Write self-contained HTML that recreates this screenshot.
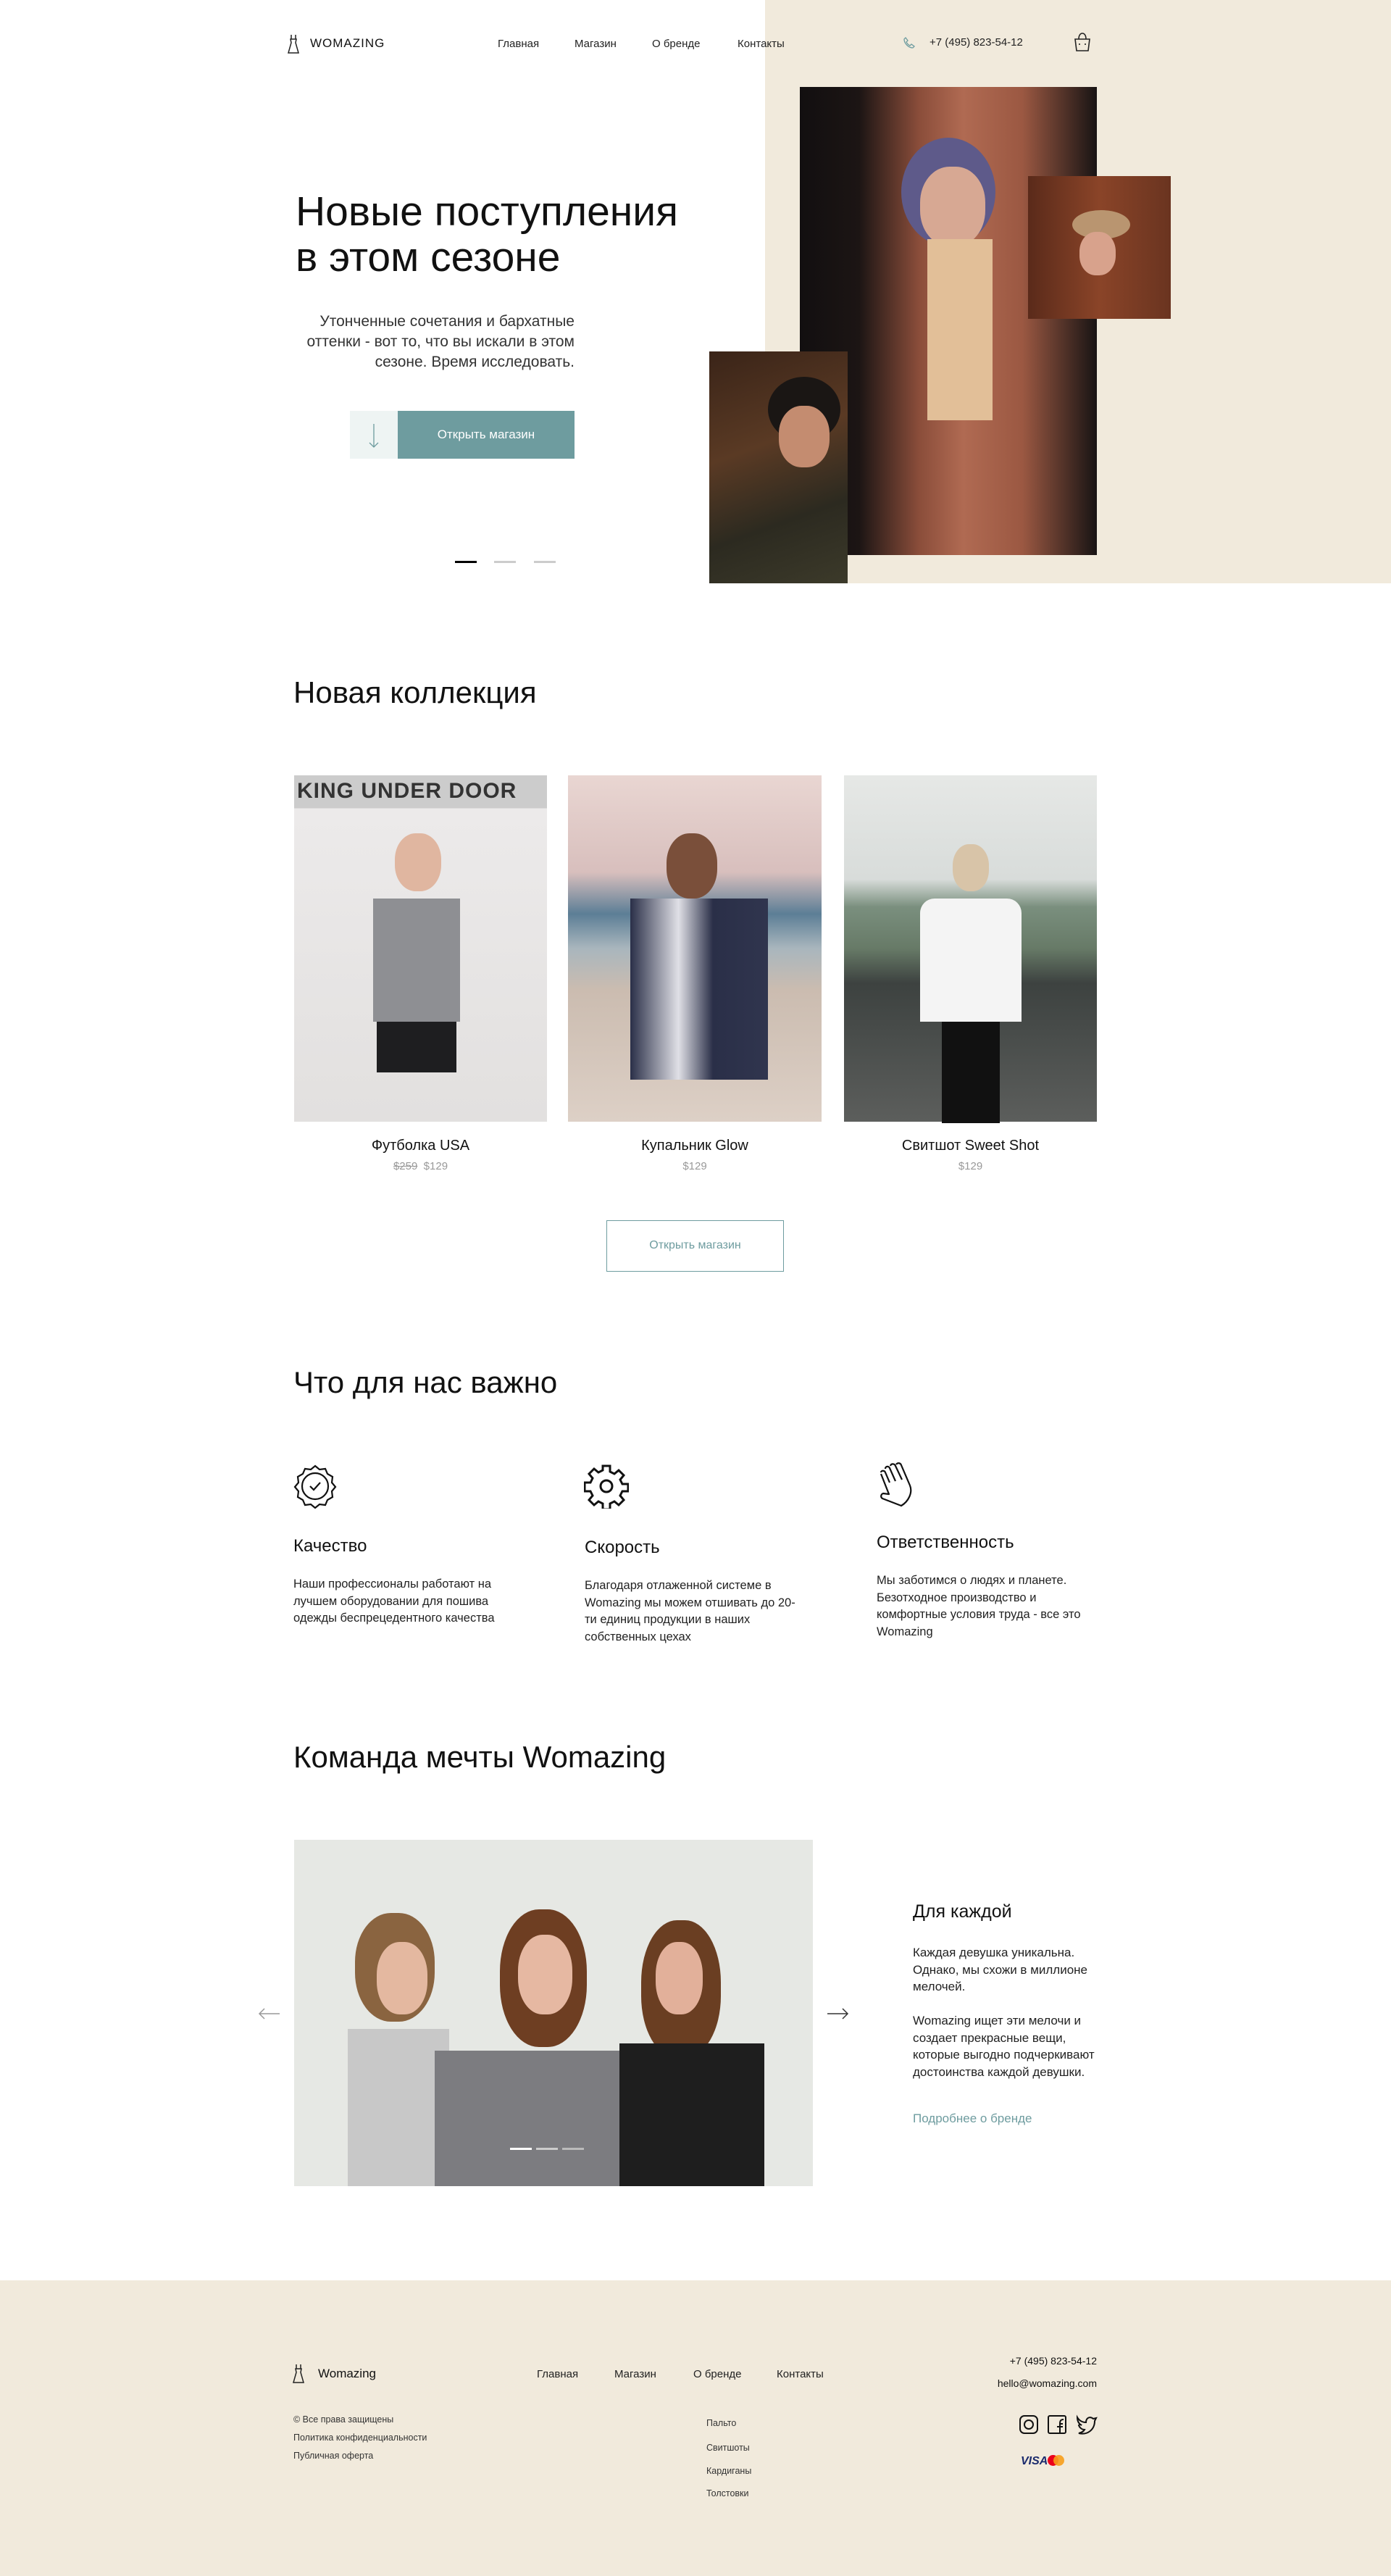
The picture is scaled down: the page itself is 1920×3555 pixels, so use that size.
<!DOCTYPE html>
<html><head><meta charset="utf-8"><style>
*{margin:0;padding:0;box-sizing:border-box}
body{width:1920px;height:3555px;position:relative;background:#fff;font-family:"Liberation Sans","Noto Sans CJK SC",sans-serif;color:#111;overflow:hidden}
.a{position:absolute}
.nav{font-size:15px;color:#222}
.t{white-space:nowrap}
</style></head><body>
<div class="a" style="left:1056px;top:0;width:864px;height:805px;background:#F1EADC"></div>
<!-- header -->
<svg class="a" style="left:396px;top:47px" width="18" height="28" viewBox="0 0 18 28" fill="none" stroke="#222" stroke-width="1.5"><path d="M6 1v6M12 1v6M5 7h8l-1 5 4 14H2l4-14z"/></svg>
<div class="a t" style="left:428px;top:50px;font-size:17px;letter-spacing:1px">WOMAZING</div>
<div class="a t nav" style="left:687px;top:52px">Главная</div>
<div class="a t nav" style="left:793px;top:52px">Магазин</div>
<div class="a t nav" style="left:900px;top:52px">О бренде</div>
<div class="a t nav" style="left:1018px;top:52px">Контакты</div>
<svg class="a" style="left:1246px;top:50px" width="18" height="18" viewBox="0 0 18 18" fill="none" stroke="#6E9C9F" stroke-width="1.3"><path d="M4 2l3 4-2 2c1 2 3 4 5 5l2-2 4 3-2 2C8 16 2 10 2 4z"/></svg>
<div class="a t nav" style="left:1283px;top:50px">+7 (495) 823-54-12</div>
<svg class="a" style="left:1481px;top:43px" width="26" height="30" viewBox="0 0 26 30" fill="none" stroke="#222" stroke-width="1.6"><path d="M3 11h20l-2 16H5z M8 11c0-5 2-8 5-8s5 3 5 8 M9 17v2M17 17v2"/></svg>
<!-- hero -->
<div class="a t" style="left:408px;top:261px;font-size:57px;line-height:63px;font-weight:400">Новые поступления<br>в этом сезоне</div>
<div class="a" style="left:390px;top:430px;width:403px;text-align:right;font-size:21px;line-height:28px;color:#333">Утонченные сочетания и бархатные оттенки - вот то, что вы искали в этом сезоне. Время исследовать.</div>
<div class="a" style="left:483px;top:567px;width:66px;height:66px;background:#EEF4F3"></div>
<svg class="a" style="left:506px;top:583px" width="20" height="36" viewBox="0 0 20 36" fill="none" stroke="#6E9C9F" stroke-width="1.3"><path d="M10 2v32M4 28l6 6 6-6"/></svg>
<div class="a" style="left:549px;top:567px;width:244px;height:66px;background:#6E9C9F;color:#fff;font-size:17px;text-align:center;line-height:66px">Открыть магазин</div>
<div class="a" style="left:628px;top:774px;width:30px;height:3px;background:#000"></div>
<div class="a" style="left:682px;top:774px;width:30px;height:3px;background:#ccc"></div>
<div class="a" style="left:737px;top:774px;width:30px;height:3px;background:#ccc"></div>
<div class="a" style="left:1104px;top:120px;width:410px;height:646px;background:linear-gradient(90deg,#120f10 0%,#1c1514 20%,#8a4d3a 40%,#b06a52 55%,#9b5842 75%,#181414 100%)"></div>
<div class="a" style="left:1244px;top:190px;width:130px;height:150px;border-radius:50%;background:#5e5a8a"></div>
<div class="a" style="left:1270px;top:230px;width:90px;height:110px;border-radius:45%;background:#d7a893"></div>
<div class="a" style="left:1280px;top:330px;width:90px;height:250px;background:#e2bf98"></div>
<div class="a" style="left:1419px;top:243px;width:197px;height:197px;background:linear-gradient(90deg,#5a2a1a,#8a4428 50%,#6a3420)"></div>
<div class="a" style="left:1480px;top:290px;width:80px;height:40px;border-radius:50%;background:#b99570"></div>
<div class="a" style="left:1490px;top:320px;width:50px;height:60px;border-radius:45%;background:#d8a28c"></div>
<div class="a" style="left:979px;top:485px;width:191px;height:320px;background:linear-gradient(160deg,#3a2418,#5a3a24 40%,#2c2a20 70%,#3c3a2a)"></div>
<div class="a" style="left:1060px;top:520px;width:100px;height:90px;border-radius:50%;background:#1a1614"></div>
<div class="a" style="left:1075px;top:560px;width:70px;height:85px;border-radius:45%;background:#c48c70"></div>
<!-- new collection -->
<div class="a t" style="left:405px;top:932px;font-size:42px">Новая коллекция</div>
<div class="a" style="left:406px;top:1070px;width:349px;height:478px;background:linear-gradient(180deg,#ccc 0,#ccc 45px,#eceaea 46px,#e2e0df 100%)"></div>
<div class="a t" style="left:410px;top:1075px;font-size:30px;font-weight:bold;color:#333;letter-spacing:1px">KING UNDER DOOR</div>
<div class="a" style="left:545px;top:1150px;width:64px;height:80px;border-radius:45%;background:#e0b6a0"></div>
<div class="a" style="left:515px;top:1240px;width:120px;height:170px;background:#8e8f93"></div>
<div class="a" style="left:520px;top:1410px;width:110px;height:70px;background:#1e1e20"></div>
<div class="a" style="left:784px;top:1070px;width:350px;height:478px;background:linear-gradient(180deg,#e9d6d2 0%,#d8bfbd 28%,#5c7e96 40%,#a9b6bd 50%,#cbbcb0 62%,#ddd0c6 100%)"></div>
<div class="a" style="left:920px;top:1150px;width:70px;height:90px;border-radius:45%;background:#7a4f3a"></div>
<div class="a" style="left:870px;top:1240px;width:190px;height:250px;background:linear-gradient(90deg,#2a2f48,#e0e0e6 35%,#2a2f48 60%,#30354e)"></div>
<div class="a" style="left:1165px;top:1070px;width:349px;height:478px;background:linear-gradient(180deg,#e6e8e6 0%,#d8dcda 30%,#7a8f7e 38%,#677a67 50%,#3d4240 60%,#5c5e5c 100%)"></div>
<div class="a" style="left:1315px;top:1165px;width:50px;height:65px;border-radius:45%;background:#d8c4a8"></div>
<div class="a" style="left:1270px;top:1240px;width:140px;height:170px;background:#f4f4f4;border-radius:20px 20px 0 0"></div>
<div class="a" style="left:1300px;top:1410px;width:80px;height:140px;background:#111"></div>
<div class="a" style="left:406px;top:1570px;width:349px;text-align:center;font-size:20px">Футболка USA</div>
<div class="a" style="left:406px;top:1601px;width:349px;text-align:center;font-size:15px;color:#999"><s>$259</s>&nbsp; $129</div>
<div class="a" style="left:784px;top:1570px;width:350px;text-align:center;font-size:20px">Купальник Glow</div>
<div class="a" style="left:784px;top:1601px;width:350px;text-align:center;font-size:15px;color:#999">$129</div>
<div class="a" style="left:1165px;top:1570px;width:349px;text-align:center;font-size:20px">Свитшот Sweet Shot</div>
<div class="a" style="left:1165px;top:1601px;width:349px;text-align:center;font-size:15px;color:#999">$129</div>
<div class="a" style="left:837px;top:1684px;width:245px;height:71px;border:1.5px solid #6E9C9F;color:#6E9C9F;font-size:16px;text-align:center;line-height:68px">Открыть магазин</div>
<!-- values -->
<div class="a t" style="left:405px;top:1884px;font-size:42px">Что для нас важно</div>
<svg class="a" style="left:404px;top:2020px" width="62" height="62" viewBox="0 0 62 62" fill="none" stroke="#111" stroke-width="2.2"><path d="M31 3l6 5 8-1 3 7 7 4-1 8 5 6-5 6 1 8-7 4-3 7-8-1-6 5-6-5-8 1-3-7-7-4 1-8-5-6 5-6-1-8 7-4 3-7 8 1z"/><circle cx="31" cy="31" r="18"/><path d="M24 31l5 5 9-10"/></svg>
<svg class="a" style="left:806px;top:2020px" width="62" height="62" viewBox="0 0 62 62" fill="none" stroke="#111" stroke-width="3"><path d="M26 3h10v8l6 3 6-5 7 7-5 6 3 6h8v10h-8l-3 6 5 6-7 7-6-5-6 3v8H26v-8l-6-3-6 5-7-7 5-6-3-6H1V26h8l3-6-5-6 7-7 6 5 6-3z"/><circle cx="31" cy="31" r="8"/></svg>
<svg class="a" style="left:1210px;top:2018px" width="58" height="64" viewBox="0 0 58 64" fill="none" stroke="#111" stroke-width="2.2" stroke-linejoin="round"><path d="M6 14c0-3 5-3 6 0l6 14M12 9c0-4 5-4 6-1l8 18M19 5c1-4 6-3 7 0l9 19M27 3c2-3 6-2 7 1l12 28c4 10-2 22-12 28L8 50c-3-2-2-6 1-7l8 1L6 16"/></svg>
<div class="a t" style="left:405px;top:2120px;font-size:24px">Качество</div>
<div class="a t" style="left:807px;top:2122px;font-size:24px">Скорость</div>
<div class="a t" style="left:1210px;top:2115px;font-size:24px">Ответственность</div>
<div class="a" style="left:405px;top:2175px;width:312px;font-size:16.5px;line-height:23.5px;color:#222">Наши профессионалы работают на лучшем оборудовании для пошива одежды беспрецедентного качества</div>
<div class="a" style="left:807px;top:2177px;width:305px;font-size:16.5px;line-height:23.5px;color:#222">Благодаря отлаженной системе в Womazing мы можем отшивать до 20-ти единиц продукции в наших собственных цехах</div>
<div class="a" style="left:1210px;top:2170px;width:300px;font-size:16.5px;line-height:23.5px;color:#222">Мы заботимся о людях и планете. Безотходное производство и комфортные условия труда - все это Womazing</div>
<!-- team -->
<div class="a t" style="left:405px;top:2401px;font-size:42px">Команда мечты Womazing</div>
<div class="a" style="left:406px;top:2539px;width:716px;height:478px;background:#e6e8e4"></div>
<div class="a" style="left:490px;top:2640px;width:110px;height:150px;border-radius:45%;background:#8a6440"></div>
<div class="a" style="left:520px;top:2680px;width:70px;height:100px;border-radius:45%;background:#e4b8a0"></div>
<div class="a" style="left:480px;top:2800px;width:140px;height:217px;background:#c8c8c8"></div>
<div class="a" style="left:690px;top:2635px;width:120px;height:190px;border-radius:45%;background:#6e3e22"></div>
<div class="a" style="left:715px;top:2670px;width:75px;height:110px;border-radius:45%;background:#e6b8a2"></div>
<div class="a" style="left:600px;top:2830px;width:270px;height:187px;background:#7c7c80"></div>
<div class="a" style="left:885px;top:2650px;width:110px;height:190px;border-radius:45%;background:#6a3e22"></div>
<div class="a" style="left:905px;top:2680px;width:65px;height:100px;border-radius:45%;background:#e2b09a"></div>
<div class="a" style="left:855px;top:2820px;width:200px;height:197px;background:#1e1e1e"></div>
<div class="a" style="left:704px;top:2964px;width:30px;height:3px;background:#fff"></div>
<div class="a" style="left:740px;top:2964px;width:30px;height:3px;background:#ccc"></div>
<div class="a" style="left:776px;top:2964px;width:30px;height:3px;background:#bbb"></div>
<svg class="a" style="left:356px;top:2770px" width="32" height="18" viewBox="0 0 32 18" fill="none" stroke="#999" stroke-width="1.5"><path d="M30 9H2M9 2L2 9l7 7"/></svg>
<svg class="a" style="left:1140px;top:2770px" width="32" height="18" viewBox="0 0 32 18" fill="none" stroke="#333" stroke-width="1.5"><path d="M2 9h28M23 2l7 7-7 7"/></svg>
<div class="a t" style="left:1260px;top:2624px;font-size:25px">Для каждой</div>
<div class="a" style="left:1260px;top:2683px;width:255px;font-size:17px;line-height:23.5px;color:#222">Каждая девушка уникальна. Однако, мы схожи в миллионе мелочей.</div>
<div class="a" style="left:1260px;top:2777px;width:255px;font-size:17px;line-height:23.5px;color:#222">Womazing ищет эти мелочи и создает прекрасные вещи, которые выгодно подчеркивают достоинства каждой девушки.</div>
<div class="a t" style="left:1260px;top:2914px;font-size:17px;color:#6E9C9F">Подробнее о бренде</div>
<!-- footer -->
<div class="a" style="left:0;top:3147px;width:1920px;height:408px;background:#F1EADC"></div>
<svg class="a" style="left:403px;top:3262px" width="18" height="28" viewBox="0 0 18 28" fill="none" stroke="#222" stroke-width="1.5"><path d="M6 1v6M12 1v6M5 7h8l-1 5 4 14H2l4-14z"/></svg>
<div class="a t" style="left:439px;top:3266px;font-size:17px">Womazing</div>
<div class="a t nav" style="left:741px;top:3268px">Главная</div>
<div class="a t nav" style="left:848px;top:3268px">Магазин</div>
<div class="a t nav" style="left:957px;top:3268px">О бренде</div>
<div class="a t nav" style="left:1072px;top:3268px">Контакты</div>
<div class="a t" style="left:1314px;top:3250px;width:200px;text-align:right;font-size:14px">+7 (495) 823-54-12</div>
<div class="a t" style="left:1314px;top:3281px;width:200px;text-align:right;font-size:14px">hello@womazing.com</div>
<div class="a t" style="left:405px;top:3332px;font-size:12.5px;color:#333">© Все права защищены</div>
<div class="a t" style="left:405px;top:3357px;font-size:12.5px;color:#333">Политика конфиденциальности</div>
<div class="a t" style="left:405px;top:3382px;font-size:12.5px;color:#333">Публичная оферта</div>
<div class="a t" style="left:975px;top:3337px;font-size:12.5px;color:#333">Пальто</div>
<div class="a t" style="left:975px;top:3371px;font-size:12.5px;color:#333">Свитшоты</div>
<div class="a t" style="left:975px;top:3403px;font-size:12.5px;color:#333">Кардиганы</div>
<div class="a t" style="left:975px;top:3434px;font-size:12.5px;color:#333">Толстовки</div>
<svg class="a" style="left:1407px;top:3332px" width="108" height="28" viewBox="0 0 108 28" fill="none" stroke="#111" stroke-width="2"><rect x="1" y="2" width="24" height="24" rx="6"/><circle cx="13" cy="14" r="6"/><rect x="40" y="2" width="24" height="24" rx="2"/><path d="M56 26V13h4M52 17h8M56 13c0-4 1-6 5-6"/><path d="M80 4c3 5 7 7 12 7 0-6 5-9 10-5l4-1-2 4c0 12-10 20-22 17 4-1 7-3 8-5-4 0-7-3-8-6 2-2 4 0 4 0-4-2-6-6-6-11z"/></svg>
<div class="a t" style="left:1409px;top:3388px;font-size:16px;font-weight:bold;font-style:italic;color:#1a2a6c">VISA</div>
<div class="a" style="left:1446px;top:3388px;width:15px;height:15px;border-radius:50%;background:#eb001b"></div>
<div class="a" style="left:1454px;top:3388px;width:15px;height:15px;border-radius:50%;background:#f79e1b;opacity:.9"></div>
</body></html>
